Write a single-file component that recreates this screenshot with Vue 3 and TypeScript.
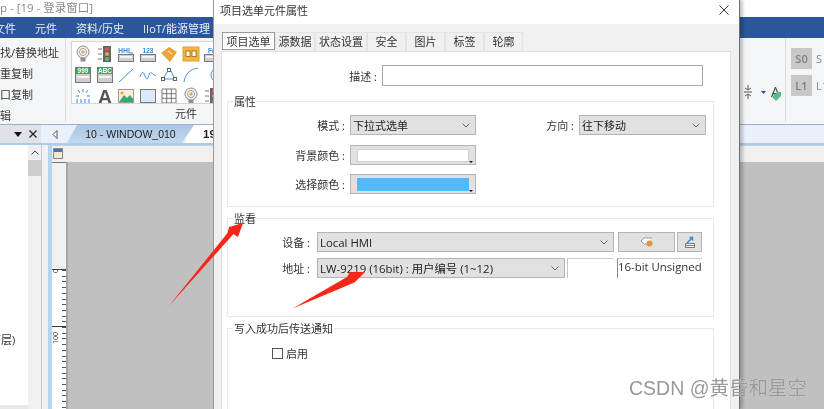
<script setup lang="ts">
interface Shape {
  k: 'path' | 'rect' | 'circle' | 'text'
  d?: string
  x?: number
  y?: number
  w?: number
  h?: number
  r?: number
  f?: string
  s?: string
  t?: string
}
const P = (d: string, s = 'none', f = 'none'): Shape => ({ k: 'path', d, s, f })
const R = (x: number, y: number, w: number, h: number, f: string, s = 'none'): Shape => ({ k: 'rect', x, y, w, h, f, s })
const C = (x: number, y: number, r: number, f: string, s = 'none'): Shape => ({ k: 'circle', x, y, r, f, s })
const T = (x: number, y: number, t: string, f: string): Shape => ({ k: 'text', x, y, t, f })

const device = (top: Shape[]): Shape[] => [R(1.500, 9.500, 15, 7, '#cfcfcf', '#777'), R(3, 11, 12, 2, '#f4f4f4'), ...top]
const tile = (label: string): Shape[] => [R(1.500, 1.500, 15, 15, '#cfcfcf', '#777'), R(2, 2, 14, 6, '#39a85c'), T(9, 7, label, '#fff'), R(3, 10, 12, 2, '#f4f4f4')]
const bulb: Shape[] = [C(9, 7, 6, '#f3f3f3', '#8a8a8a'), C(9, 7, 3.500, '#fff', '#999'), C(9, 7, 1.800, '#e6a94e'), R(6.500, 13, 5, 3.500, '#8f8f8f')]
const lamp: Shape[] = [R(7, 1, 8, 16, '#666'), C(11, 4, 2, '#e0533c'), C(11, 9, 2, '#e9a43a'), C(11, 14, 2, '#4fbf7a'), P('M2 4h4M2 9h4M2 14h4', '#777')]

const icons: Shape[][] = [
  bulb,
  lamp,
  device([P('M2 8V3M2 5.500h3M5 8V3M7 8V3M7 5.500h3M10 8V3M12 3v5h4', '#3d86d6')]),
  device([T(9, 7.500, '123', '#3d86d6')]),
  [P('M1 8l8-6 8 5-7 10z', 'none', '#e9a43a'), P('M8 6l4 3', '#fff')],
  [R(1, 2, 16, 14, '#f4b63f', '#e0a030'), R(4, 6, 4, 5.500, '#fff', '#a8791e'), R(10, 6, 4, 5.500, '#fff', '#a8791e')],
  device([T(9, 7.500, 'Fn', '#3d86d6')]),
  tile('999'),
  tile('ABC'),
  [P('M2 16L16 3', '#4a90d9')],
  [P('M1 11c2-6 3-6 5-1s3 3 4-1 2-2 7 1', '#4a90d9')],
  [R(1.500, 11.500, 3, 3, '#fff', '#666'), R(7.500, 2.500, 3, 3, '#fff', '#666'), R(13.500, 11.500, 3, 3, '#fff', '#666'), P('M4 11l4-6M11 5l3 6M5 13h8', '#4a90d9')],
  [P('M2 16C3 8 8 3 16 2', '#4a90d9')],
  [C(15, 9, 7, 'none', '#4a90d9')],
  [P('M9 2v3M4 3l2 3M14 3l-2 3M2 9l3 0M16 9l-3 0M3 12v4M7 12v4M11 12v4M15 12v4', '#3d86d6')],
  [T(9, 16.500, 'A', '#555')],
  [R(1.500, 2.500, 15, 13, '#fbeed8', '#999'), P('M2 15l5-7 3 3 3-3 3 4v3H2z', 'none', '#3aa76d'), C(5, 6, 1.500, '#e9a43a')],
  [R(1.500, 2.500, 15, 13, '#d9ebfa', '#777')],
  [P('M2 2h14v14H2zM2 6.700h14M2 11.300h14M6.700 2v14M11.300 2v14', '#777')],
  bulb,
  lamp,
]

const menus = ['元件', '资料/历史', 'IIoT/能源管理']
const tabs = ['项目选单', '源数据', '状态设置', '安全', '图片', '标签', '轮廓']
</script>

<template>
  <div class="app">
    <div class="titlebar">p - [19 - 登录窗口]</div>
    <div class="menubar">
      <span class="file">文件</span>
      <span v-for="m in menus" :key="m">{{ m }}</span>
    </div>
    <div class="ribbon">
      <div class="edit-group">
        <span>找/替换地址</span>
        <span>重复制</span>
        <span>口复制</span>
        <span>辑</span>
      </div>
      <div class="parts-group">
        <div class="gallery">
          <svg v-for="(icon, i) in icons" :key="i" class="rib-icon" viewBox="0 0 18 18">
            <template v-for="(s, j) in icon" :key="j">
              <path v-if="s.k === 'path'" :d="s.d" :fill="s.f" :stroke="s.s" />
              <rect v-else-if="s.k === 'rect'" :x="s.x" :y="s.y" :width="s.w" :height="s.h" :fill="s.f" :stroke="s.s" />
              <circle v-else-if="s.k === 'circle'" :cx="s.x" :cy="s.y" :r="s.r" :fill="s.f" :stroke="s.s" />
              <text v-else :x="s.x" :y="s.y" :fill="s.f" :font-size="s.t === 'A' ? 20 : 6.5" text-anchor="middle" font-family="Liberation Sans, sans-serif" font-weight="700">{{ s.t }}</text>
            </template>
          </svg>
        </div>
        <div class="group-name">元件</div>
      </div>
      <div class="ribbon-right">
        <div class="fmt-tools">
          <svg width="10" height="14" viewBox="0 0 10 14"><path d="M5 0v5M2 3l3 2 3-2M1 7h8M5 9v5M2 11l3-2 3 2" fill="none" stroke="#555" /></svg>
          <svg width="5" height="3" viewBox="0 0 5 3"><path d="M0 0h5L2.500 3z" fill="#2b579a" /></svg>
          <span class="font-a">A</span>
          <svg class="fmt-tag" width="9" height="9" viewBox="0 0 9 9"><path d="M0 5l5-5h4v4L4 9z" fill="#5cb98a" /></svg>
        </div>
        <div class="state-col">
          <div class="state-row"><b>S0</b><span>S</span></div>
          <div class="state-row"><b>L1</b><span>L1</span></div>
        </div>
      </div>
    </div>
    <div class="tabrow">
      <div class="panel-head">
        <svg width="8" height="5" viewBox="0 0 8 5"><path d="M0 0h8L4 5z" fill="#111" /></svg>
        <svg width="8" height="8" viewBox="0 0 8 8"><path d="M0.500 0.500l7 7M7.500 0.500l-7 7" stroke="#222" stroke-width="1.300" /></svg>
      </div>
      <svg class="tab-prev" width="6" height="9" viewBox="0 0 6 9"><path d="M5 0.500L1 4.500l4 4z" fill="#fff" stroke="#555" /></svg>
      <div class="win-tab">10 - WINDOW_010</div>
      <div class="win-tab active">19</div>
    </div>
    <div class="work">
      <div class="tree">
        <div class="tree-body">
          <span class="tree-text">下层)</span>
          <div class="tree-foot"></div>
        </div>
        <div class="scroll">
          <svg width="8" height="5" viewBox="0 0 8 5"><path d="M0.500 4.500L4 1l3.500 3.500" fill="none" stroke="#444" /></svg>
          <div class="thumb"></div>
        </div>
      </div>
      <div class="splitter"></div>
      <div class="doc">
        <div class="ruler-top">
          <div class="corner"><span></span></div>
        </div>
        <div class="doc-body">
          <div class="ruler-left">
            <div class="ruler-blank"></div>
            <div class="ruler-scale">
              <span class="rn rn0">0</span>
              <span class="rn rn100">100</span>
              <i class="major"></i>
            </div>
          </div>
          <div class="canvas"></div>
        </div>
      </div>
    </div>

    <div class="dialog">
      <div class="dlg-title">
        <span>项目选单元件属性</span>
        <svg width="10" height="10" viewBox="0 0 10 10"><path d="M0.500 0.500l9 9M9.500 0.500l-9 9" stroke="#333" /></svg>
      </div>
      <div class="dlg-body">
        <div class="dlg-tabs">
          <div v-for="(t, i) in tabs" :key="t" class="dlg-tab" :class="['t' + i, { on: i === 0 }]">{{ t }}</div>
        </div>
        <div class="page">
          <div class="desc-row">
            <label>描述 :</label>
            <div class="text-input"></div>
          </div>

          <section class="box box-attr">
            <h4>属性</h4>
            <div class="row row-first">
              <label class="l-attr">模式 :</label>
              <div class="combo w126"><span>下拉式选单</span><svg width="8" height="5" viewBox="0 0 8 5"><path d="M0.500 0.500L4 4l3.500-3.500" fill="none" stroke="#666" /></svg></div>
              <label class="l-dir">方向 :</label>
              <div class="combo w127"><span>往下移动</span><svg width="8" height="5" viewBox="0 0 8 5"><path d="M0.500 0.500L4 4l3.500-3.500" fill="none" stroke="#666" /></svg></div>
            </div>
            <div class="row">
              <label class="l-attr">背景颜色 :</label>
              <div class="color-btn"><i class="swatch white"></i><i class="caret"></i></div>
            </div>
            <div class="row">
              <label class="l-attr">选择颜色 :</label>
              <div class="color-btn"><i class="swatch blue"></i><i class="caret"></i></div>
            </div>
          </section>

          <section class="box box-watch">
            <h4>监看</h4>
            <div class="row">
              <label class="l-watch">设备 :</label>
              <div class="combo w297 latin"><span>Local HMI</span><svg width="8" height="5" viewBox="0 0 8 5"><path d="M0.500 0.500L4 4l3.500-3.500" fill="none" stroke="#666" /></svg></div>
              <div class="btn b57">
                <svg width="14" height="12" viewBox="0 0 14 12"><path d="M12 2H4L1 5l3 3h4" fill="#fff" stroke="#999" /><circle cx="9.500" cy="7.500" r="3" fill="#d79a3c" /></svg>
              </div>
              <div class="btn b25">
                <svg width="12" height="13" viewBox="0 0 12 13"><path d="M3 7l5-5M5.500 1.500h3v3" fill="none" stroke="#3d86d6" stroke-width="1.500" /><path d="M1.500 7.500h9v4h-9zM1.500 9.500h9" fill="#fff" stroke="#777" /></svg>
              </div>
            </div>
            <div class="row row-addr">
              <label class="l-watch">地址 :</label>
              <div class="combo w248 latin"><span>LW-9219 (16bit) : 用户编号 (1~12)</span><svg width="8" height="5" viewBox="0 0 8 5"><path d="M0.500 0.500L4 4l3.500-3.500" fill="none" stroke="#666" /></svg></div>
              <div class="idx-input"></div>
              <div class="type-box">16-bit Unsigned</div>
            </div>
          </section>

          <section class="box box-notify">
            <h4>写入成功后传送通知</h4>
            <div class="check-row"><i class="check"></i><span>启用</span></div>
          </section>
        </div>
      </div>
    </div>

    <svg class="arrows" width="824" height="409" viewBox="0 0 824 409">
      <path d="M168.500 306.500L227.500 233L229 227L243 223L238 237L233.500 234z" fill="#f5261a" />
      <path d="M292.500 308.500L347 277L350 272L365 272L355 282L352 283.500z" fill="#f5261a" />
    </svg>
    <div class="watermark">CSDN @黄昏和星空</div>
  </div>
</template>

<style>
html, body { margin: 0; padding: 0; background: #fff; }
</style>

<style scoped>
.app {
  position: relative;
  width: 824px;
  height: 409px;
  overflow: hidden;
  display: flex;
  flex-direction: column;
  font-family: "Open Sans", "Noto Sans CJK SC", sans-serif;
  font-size: 11px;
  color: #333;
  background: #fff;
  filter: blur(0.35px);
}
.titlebar {
  height: 17px;
  line-height: 15px;
  font-size: 11.500px;
  color: #8a8a8a;
  flex: none;
  white-space: nowrap;
}
.menubar {
  flex: none;
  height: 21px;
  background: #2b579a;
  color: #e8eef7;
  display: flex;
  align-items: center;
  gap: 19px;
  font-size: 11px;
  white-space: nowrap;
}
.file { margin-left: -6px; }
.ribbon {
  flex: none;
  height: 87px;
  background: #f4f5f6;
  border-bottom: 1px solid #9fb0c6;
  box-sizing: border-box;
  display: flex;
  position: relative;
}
.edit-group {
  width: 66px;
  flex: none;
  box-sizing: border-box;
  border-right: 1px solid #dcdcdc;
  height: 84px;
  display: flex;
  flex-direction: column;
  padding-top: 7px;
  gap: 5px;
  line-height: 16px;
  white-space: nowrap;
  font-size: 11px;
}
.parts-group {
  margin-left: 5px;
  width: 150px;
  flex: none;
}
.gallery {
  margin-top: 3px;
  height: 63px;
  box-sizing: border-box;
  background: #fff;
  border: 1px solid #d4d4d4;
  padding: 3px 0 0 2px;
  display: grid;
  grid-template-columns: repeat(7, 21.500px);
  grid-auto-rows: 21px;
  overflow: hidden;
}
.rib-icon { width: 18px; height: 18px; }
.group-name {
  text-align: right;
  padding-right: 24px;
  line-height: 18px;
  margin-top: 1px;
}
.ribbon-right {
  position: absolute;
  left: 740px;
  top: 0;
  right: 0;
  bottom: 0;
  display: flex;
}
.fmt-tools {
  width: 46px;
  flex: none;
  border-right: 1px solid #dcdcdc;
  height: 84px;
  box-sizing: border-box;
  display: flex;
  align-items: center;
  align-self: flex-start;
  position: relative;
  padding-top: 24px;
  padding-left: 3px;
  gap: 8px;
}
.font-a {
  font-size: 14px;
  color: #444;
  margin-left: -3px;
  line-height: 14px;
}
.fmt-tag { position: absolute; left: 32px; top: 54px; }
.state-col { flex: none; padding: 10px 0 0 5px; display: flex; flex-direction: column; gap: 6px; }
.state-row { display: flex; align-items: center; gap: 4px; color: #888; font-size: 11px; }
.state-row b {
  width: 21px;
  height: 21px;
  background: #c8c8c8;
  color: #7d7d7d;
  font-weight: 600;
  font-size: 11px;
  line-height: 21px;
  text-align: center;
}
.tabrow {
  flex: none;
  height: 20px;
  background: #eaf0fb;
  display: flex;
  align-items: center;
  border-bottom: 2px solid #a9cdea;
  box-sizing: border-box;
}
.panel-head {
  width: 41px;
  height: 100%;
  box-sizing: border-box;
  background: #dfe3e8;
  display: flex;
  justify-content: flex-end;
  align-items: center;
  gap: 7px;
  padding-right: 4px;
  flex: none;
}
.tab-prev { margin-left: 11px; flex: none; }
.win-tab {
  margin-left: 9px;
  width: 127px;
  height: 100%;
  flex: none;
  background: linear-gradient(#a9c6e3, #c3d8ec);
  text-align: center;
  line-height: 18px;
  font-family: "Liberation Sans", sans-serif;
  font-size: 10.500px;
  color: #222;
  clip-path: polygon(10px 0, 127px 0, 115px 100%, 0 100%);
  margin-right: -8px;
  white-space: nowrap;
}
.win-tab.active {
  margin-left: 0;
  width: 60px;
  background: #fff;
  text-align: left;
  padding-left: 17px;
  box-sizing: border-box;
  font-size: 11.500px;
  font-weight: 700;
  clip-path: none;
}
.work { flex: 1; display: flex; min-height: 0; }
.tree { width: 41px; flex: none; background: #fff; display: flex; border-right: 1px solid #c9c9c9; box-sizing: content-box; }
.tree-body { width: 28px; flex: none; position: relative; }
.tree-text {
  position: absolute;
  left: -10px;
  top: 188px;
  white-space: nowrap;
  font-size: 11px;
  line-height: 14px;
}
.tree-foot { position: absolute; left: 0; right: 0; bottom: 0; height: 4px; background: #e8e8e8; }
.scroll {
  width: 13px;
  background: #f0f0f0;
  display: flex;
  flex-direction: column;
  align-items: center;
  padding-top: 5px;
  box-sizing: border-box;
}
.thumb { width: 100%; height: 16px; background: #cdcdcd; margin-top: 5px; }
.splitter { width: 6px; flex: none; background: #eff1f4; }
.doc {
  flex: 1;
  min-width: 0;
  display: flex;
  flex-direction: column;
  border-left: 4px solid #b5d4ee;
  background: #f0f0f0;
}
.ruler-top {
  height: 17px;
  flex: none;
  display: flex;
  background: #f0f0f0;
  border-top: 1px solid #d0d0d0;
  box-sizing: border-box;
}
.corner { width: 14px; padding: 2px 0 0 1px; box-sizing: border-box; }
.corner span {
  display: block;
  width: 10px;
  height: 11px;
  background: linear-gradient(#3c78c0 0 3px, #f6e7c8 3px);
  border: 1px solid #888;
  box-sizing: border-box;
}
.doc-body { flex: 1; display: flex; min-height: 0; }
.ruler-left {
  width: 14px;
  flex: none;
  display: flex;
  flex-direction: column;
  border-right: 2px solid #a6a6a6;
  box-sizing: content-box;
}
.ruler-blank { height: 107px; background: #f0f0f0; border-top: 1px solid #777; box-sizing: border-box; }
.ruler-scale {
  flex: 1;
  position: relative;
  background-color: #fff;
  background-image: repeating-linear-gradient(to bottom, #555 0 1px, transparent 1px 5.700px);
  background-size: 4px 100%;
  background-position: right top;
  background-repeat: no-repeat;
  border-top: 1px solid #444;
}
.rn {
  position: absolute;
  left: 0;
  font-size: 7px;
  line-height: 8px;
  writing-mode: vertical-rl;
  transform: rotate(180deg);
  color: #333;
}
.rn0 { top: -1px; }
.rn100 { top: 62px; }
.major { position: absolute; left: 0; right: 0; top: 56px; height: 1px; background: #333; }
.canvas { flex: 1; background: #c0c0c0; }

/* dialog window */
.dialog {
  position: absolute;
  left: 213px;
  top: 0;
  width: 527px;
  height: 409px;
  box-sizing: border-box;
  background: #f0f0f0;
  border-left: 1px solid #9a9a9a;
  border-right: 1px solid #6e6e6e;
  display: flex;
  flex-direction: column;
  box-shadow: 3px 0 3px rgba(0, 0, 0, .22);
}
.dlg-title {
  flex: none;
  height: 24px;
  background: #fff;
  display: flex;
  align-items: center;
  justify-content: space-between;
  padding: 0 10px 4px 6px;
  box-sizing: border-box;
  font-size: 11px;
}
.dlg-body { flex: 1; padding: 8px 8px 0 7px; display: flex; flex-direction: column; min-height: 0; }
.dlg-tabs { display: flex; height: 19px; flex: none; padding-left: 1px; }
.dlg-tab {
  line-height: 17px;
  text-align: center;
  box-sizing: border-box;
  border: 1px solid #e4e4e4;
  border-bottom: none;
  font-size: 11px;
  white-space: nowrap;
}
.dlg-tab.on { background: #fff; border-color: #9a9a9a; border-bottom: 1px solid #9a9a9a; height: 18px; }
.t0 { width: 53px; }
.t1 { width: 40px; }
.t2 { width: 52px; }
.t3 { width: 39px; }
.t4, .t5, .t6 { width: 39px; }
.page {
  flex: 1;
  background: #fff;
  border: 1px solid #dfdfdf;
  border-bottom: none;
  box-sizing: border-box;
  min-height: 0;
  padding: 13px 0 0 5px;
  overflow: hidden;
}
label { color: #333; white-space: nowrap; text-align: right; font-size: 11px; }
.desc-row { display: flex; align-items: center; gap: 5px; margin-left: -5px; }
.desc-row label { width: 155px; flex: none; }
.text-input { width: 321px; height: 21px; box-sizing: border-box; border: 1px solid #a8a8a8; background: #fff; }
.box {
  position: relative;
  width: 487px;
  box-sizing: border-box;
  border: 1px solid #e8e8e8;
  margin-top: 11px;
}
.box h4 {
  position: absolute;
  left: 5px;
  top: -8px;
  margin: 0;
  padding: 0 1px;
  background: #fff;
  font-weight: 400;
  font-size: 11px;
  line-height: 15px;
  color: #333;
}
.box-attr { height: 106px; margin-top: 15px; padding-top: 13px; display: flex; flex-direction: column; gap: 9px; }
.box-watch { height: 99px; padding-top: 13px; display: flex; flex-direction: column; gap: 6px; }
.box-notify { height: 100px; }
.row { display: flex; align-items: center; gap: 5px; height: 20px; flex: none; }
.row-first { margin-bottom: 1px; }
.l-attr { width: 117px; flex: none; }
.l-dir { width: 93px; flex: none; }
.l-watch { width: 82px; flex: none; margin-right: 2px; }
.combo {
  height: 20px;
  box-sizing: border-box;
  background: #e1e1e1;
  border: 1px solid #b4b4b4;
  display: flex;
  align-items: center;
  justify-content: space-between;
  padding: 0 5px 0 2px;
  flex: none;
  font-size: 11px;
  color: #222;
  white-space: nowrap;
}
.combo.latin { font-size: 11.400px; }
.w126 { width: 126px; }
.w127 { width: 127px; }
.w297 { width: 297px; }
.w248 { width: 248px; }
.color-btn {
  position: relative;
  width: 126px;
  height: 20px;
  box-sizing: border-box;
  background: #e1e1e1;
  border: 1px solid #b4b4b4;
  padding: 3px 6px;
}
.swatch { display: block; height: 13px; border: 1px solid #d0d0d0; box-sizing: border-box; }
.swatch.white { background: #fff; }
.swatch.blue { background: #4fbaff; border-color: #4fbaff; }
.caret {
  position: absolute;
  right: 2px;
  bottom: 1px;
  width: 0;
  height: 0;
  border: 2.500px solid transparent;
  border-top-color: #111;
  border-bottom: none;
}
.btn {
  height: 20px;
  box-sizing: border-box;
  background: #e1e1e1;
  border: 1px solid #b4b4b4;
  display: flex;
  align-items: center;
  justify-content: center;
  flex: none;
}
.b57 { width: 57px; margin-left: -1px; }
.b25 { width: 25px; margin-left: -3px; }
.row-addr { gap: 2px; }
.row-addr .l-watch { margin-right: 5px; }
.idx-input {
  width: 46px;
  height: 20px;
  box-sizing: border-box;
  border-top: 1px solid #c8c8c8;
  border-left: 1px solid #c8c8c8;
  flex: none;
}
.type-box {
  margin-left: 2px;
  width: 85px;
  height: 20px;
  box-sizing: border-box;
  border-top: 1px solid #c8c8c8;
  border-left: 1px solid #8c8c8c;
  font-size: 11.400px;
  line-height: 16px;
  white-space: nowrap;
  flex: none;
}
.check-row { display: flex; align-items: center; gap: 3px; padding: 16px 0 0 44px; }
.check { width: 11px; height: 11px; border: 1px solid #555; box-sizing: border-box; display: block; background: #fff; }
.arrows { position: absolute; left: 0; top: 0; pointer-events: none; }
.watermark {
  position: absolute;
  left: 629px;
  top: 375px;
  font-size: 19.500px;
  line-height: 26px;
  white-space: nowrap;
  color: #999;
  font-family: "Liberation Sans", "Noto Sans CJK SC", sans-serif;
  text-shadow: 0 0 1px rgba(255, 255, 255, .8);
}
</style>
